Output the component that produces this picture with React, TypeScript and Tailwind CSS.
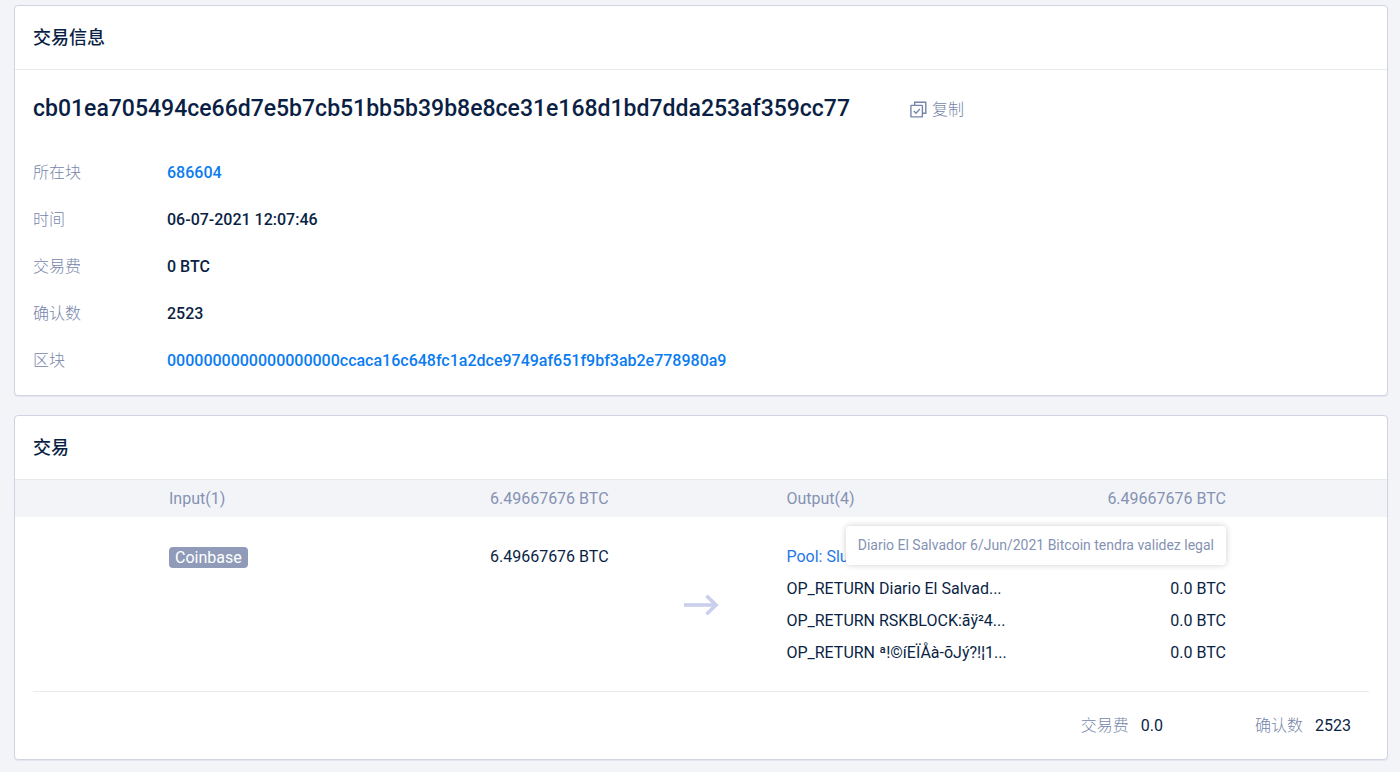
import type { ReactNode } from "react";

const TX_HASH = "cb01ea705494ce66d7e5b7cb51bb5b39b8e8ce31e168d1bd7dda253af359cc77";
const BLOCK_HASH = "0000000000000000000ccaca16c648fc1a2dce9749af651f9bf3ab2e778980a9";

type Detail = { label: string; value: string; link?: boolean };

const details: Detail[] = [
  { label: "所在块", value: "686604", link: true },
  { label: "时间", value: "06-07-2021 12:07:46" },
  { label: "交易费", value: "0 BTC" },
  { label: "确认数", value: "2523" },
  { label: "区块", value: BLOCK_HASH, link: true },
];

type Output = { label: string; amount: string; link?: boolean; tooltip?: string };

const outputs: Output[] = [
  { label: "Pool: SlushPool", amount: "6.49667676 BTC", link: true },
  {
    label: "OP_RETURN Diario El Salvad...",
    amount: "0.0 BTC",
    tooltip: "Diario El Salvador 6/Jun/2021 Bitcoin tendra validez legal",
  },
  { label: "OP_RETURN RSKBLOCK:ãÿ²4...", amount: "0.0 BTC" },
  { label: "OP_RETURN ª!©íEÏÅà-õJý?!¦1...", amount: "0.0 BTC" },
];

function CopyIcon() {
  return (
    <svg width="17" height="17" viewBox="0 0 17 17" fill="none" stroke="currentColor" strokeWidth="1.4" aria-hidden="true">
      <path d="M4.7 4.2V1.2h11.1v11.1h-3.2" />
      <rect x="0.9" y="4.4" width="11.5" height="11.5" rx="0.5" />
      <path d="M3.8 9.9l2.2 2.3 3.8-4.1" />
    </svg>
  );
}

function ArrowIcon() {
  return (
    <svg width="35" height="22" viewBox="0 0 35 22" fill="none" stroke="#c9cfec" strokeWidth="3.6" aria-hidden="true">
      <path d="M0 11h32" />
      <path d="M22.5 1.8l9.5 9.2-9.5 9.2" />
    </svg>
  );
}

function Card({ title, children }: { title: string; children: ReactNode }) {
  return (
    <section className="rounded border border-[#d0d4e2] bg-white shadow-[0_1px_1px_#e3e6ee]">
      <h2 className="flex h-16 items-center border-b border-[#e9eaee] px-[18px] text-lg font-medium">
        {title}
      </h2>
      {children}
    </section>
  );
}

function TransactionInfo() {
  return (
    <Card title="交易信息">
      <div className="flex h-[79px] items-center gap-[60px] px-[18px]">
        <h1 className="text-[23px] font-medium">{TX_HASH}</h1>
        <button
          type="button"
          onClick={() => navigator.clipboard.writeText(TX_HASH)}
          className="flex shrink-0 cursor-pointer items-center gap-[5px] font-light text-[#7785aa]"
        >
          <CopyIcon />
          复制
        </button>
      </div>
      <dl className="px-[18px] pb-[11px]">
        {details.map((item) => (
          <div key={item.label} className="flex h-[47px] items-center">
            <dt className="w-[134px] shrink-0 font-light text-[#7785aa]">{item.label}</dt>
            <dd className="font-medium">
              {item.link ? (
                <a href="#" className="text-[#0a7cf0]">
                  {item.value}
                </a>
              ) : (
                item.value
              )}
            </dd>
          </div>
        ))}
      </dl>
    </Card>
  );
}

function Transaction() {
  return (
    <Card title="交易">
      <div className="grid h-[37px] grid-cols-[440fr_178fr_440fr] items-center bg-[#f3f4f8] pr-[161px] pl-[154px] text-[#8592b3]">
        <div className="flex justify-between">
          <span>Input(1)</span>
          <span>6.49667676 BTC</span>
        </div>
        <div />
        <div className="flex justify-between">
          <span>Output(4)</span>
          <span>6.49667676 BTC</span>
        </div>
      </div>

      <div className="grid grid-cols-[440fr_178fr_440fr] pt-6 pr-[161px] pb-[22px] pl-[154px]">
        <div className="flex h-8 items-center justify-between">
          <span className="rounded bg-[#8f9bb8] px-[6px] leading-[21px] text-white">Coinbase</span>
          <span>6.49667676 BTC</span>
        </div>
        <div className="flex items-center justify-center pl-2">
          <ArrowIcon />
        </div>
        <ul>
          {outputs.map((output) => (
            <li key={output.label} className="relative flex h-8 items-center justify-between">
              {output.link ? (
                <a href="#" className="text-[#1f78e8]">
                  {output.label}
                </a>
              ) : (
                <span>{output.label}</span>
              )}
              <span>{output.amount}</span>
              {output.tooltip && (
                <div
                  role="tooltip"
                  className="absolute right-0 bottom-full mb-2 rounded bg-white px-3 text-sm leading-[39px] whitespace-nowrap text-[#8592b3] shadow-[0_0_6px_rgba(0,0,0,0.2)]"
                >
                  {output.tooltip}
                </div>
              )}
            </li>
          ))}
        </ul>
      </div>

      <dl className="mx-[18px] flex h-[68px] items-center justify-end gap-[92px] border-t border-[#e9eaee] pr-[18px]">
        <div className="flex gap-3">
          <dt className="font-light text-[#7785aa]">交易费</dt>
          <dd>0.0</dd>
        </div>
        <div className="flex gap-3">
          <dt className="font-light text-[#7785aa]">确认数</dt>
          <dd>2523</dd>
        </div>
      </dl>
    </Card>
  );
}

export default function App() {
  return (
    <main className="flex min-h-screen flex-col gap-[19px] bg-[#f3f4f8] pt-[5px] pr-3 pb-3 pl-[14px] font-[Roboto,'Noto_Sans_CJK_SC',sans-serif] text-base text-[#0b1f45]">
      <TransactionInfo />
      <Transaction />
    </main>
  );
}
